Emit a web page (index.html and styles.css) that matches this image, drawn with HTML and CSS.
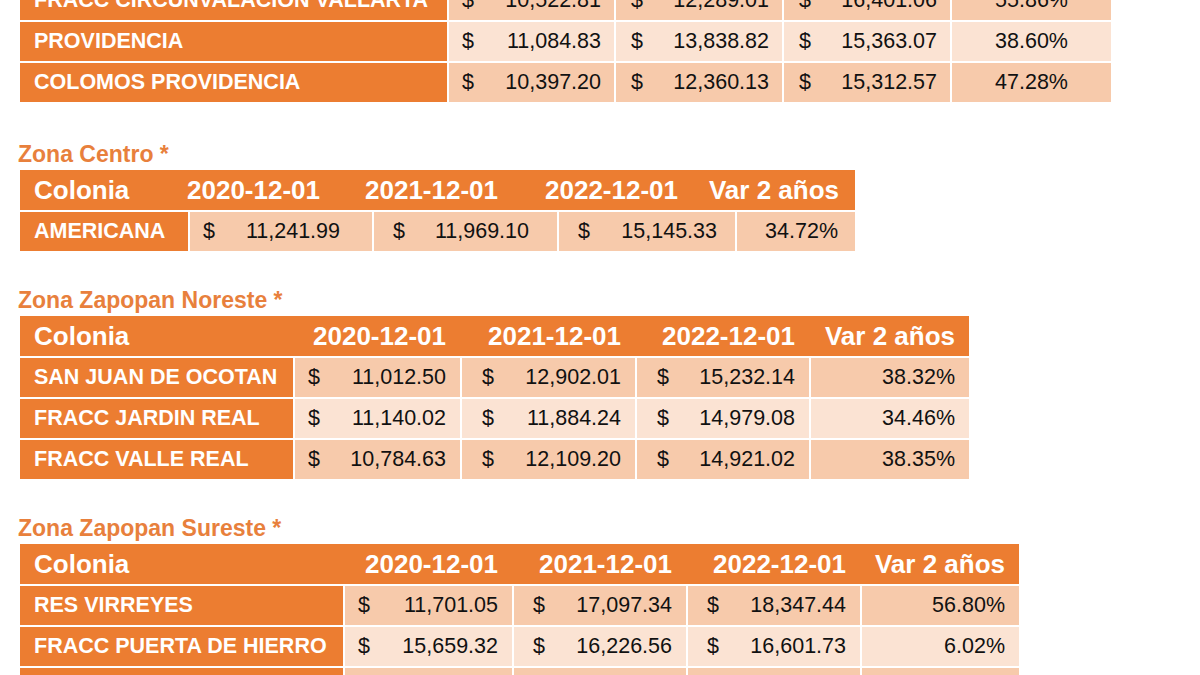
FILE: index.html
```html
<!DOCTYPE html>
<html lang="es">
<head>
<meta charset="utf-8">
<title>Precios por colonia</title>
<link rel="stylesheet" href="styles.css">
</head>
<body>
<main class="sheet">

  <section class="zone zone-top">
    <div class="tbl t-top">
      <div class="row odd">
        <div class="cell name">FRACC CIRCUNVALACION VALLARTA</div>
        <div class="cell money"><span>$</span><span>10,522.81</span></div>
        <div class="cell money"><span>$</span><span>12,289.01</span></div>
        <div class="cell money"><span>$</span><span>16,401.06</span></div>
        <div class="cell pct">55.86%</div>
      </div>
      <div class="row even">
        <div class="cell name">PROVIDENCIA</div>
        <div class="cell money"><span>$</span><span>11,084.83</span></div>
        <div class="cell money"><span>$</span><span>13,838.82</span></div>
        <div class="cell money"><span>$</span><span>15,363.07</span></div>
        <div class="cell pct">38.60%</div>
      </div>
      <div class="row odd">
        <div class="cell name">COLOMOS PROVIDENCIA</div>
        <div class="cell money"><span>$</span><span>10,397.20</span></div>
        <div class="cell money"><span>$</span><span>12,360.13</span></div>
        <div class="cell money"><span>$</span><span>15,312.57</span></div>
        <div class="cell pct">47.28%</div>
      </div>
    </div>
  </section>

  <section class="zone zone-centro">
    <h2 class="zone-title">Zona Centro *</h2>
    <div class="tbl t-centro">
      <div class="row head">
        <div class="cell">Colonia</div>
        <div class="cell">2020-12-01</div>
        <div class="cell">2021-12-01</div>
        <div class="cell">2022-12-01</div>
        <div class="cell">Var 2 años</div>
      </div>
      <div class="row odd">
        <div class="cell name">AMERICANA</div>
        <div class="cell money"><span>$</span><span>11,241.99</span></div>
        <div class="cell money"><span>$</span><span>11,969.10</span></div>
        <div class="cell money"><span>$</span><span>15,145.33</span></div>
        <div class="cell pct">34.72%</div>
      </div>
    </div>
  </section>

  <section class="zone">
    <h2 class="zone-title">Zona Zapopan Noreste *</h2>
    <div class="tbl t-noreste">
      <div class="row head">
        <div class="cell">Colonia</div>
        <div class="cell">2020-12-01</div>
        <div class="cell">2021-12-01</div>
        <div class="cell">2022-12-01</div>
        <div class="cell">Var 2 años</div>
      </div>
      <div class="row odd">
        <div class="cell name">SAN JUAN DE OCOTAN</div>
        <div class="cell money"><span>$</span><span>11,012.50</span></div>
        <div class="cell money"><span>$</span><span>12,902.01</span></div>
        <div class="cell money"><span>$</span><span>15,232.14</span></div>
        <div class="cell pct">38.32%</div>
      </div>
      <div class="row even">
        <div class="cell name">FRACC JARDIN REAL</div>
        <div class="cell money"><span>$</span><span>11,140.02</span></div>
        <div class="cell money"><span>$</span><span>11,884.24</span></div>
        <div class="cell money"><span>$</span><span>14,979.08</span></div>
        <div class="cell pct">34.46%</div>
      </div>
      <div class="row odd">
        <div class="cell name">FRACC VALLE REAL</div>
        <div class="cell money"><span>$</span><span>10,784.63</span></div>
        <div class="cell money"><span>$</span><span>12,109.20</span></div>
        <div class="cell money"><span>$</span><span>14,921.02</span></div>
        <div class="cell pct">38.35%</div>
      </div>
    </div>
  </section>

  <section class="zone">
    <h2 class="zone-title">Zona Zapopan Sureste *</h2>
    <div class="tbl t-sureste">
      <div class="row head">
        <div class="cell">Colonia</div>
        <div class="cell">2020-12-01</div>
        <div class="cell">2021-12-01</div>
        <div class="cell">2022-12-01</div>
        <div class="cell">Var 2 años</div>
      </div>
      <div class="row odd">
        <div class="cell name">RES VIRREYES</div>
        <div class="cell money"><span>$</span><span>11,701.05</span></div>
        <div class="cell money"><span>$</span><span>17,097.34</span></div>
        <div class="cell money"><span>$</span><span>18,347.44</span></div>
        <div class="cell pct">56.80%</div>
      </div>
      <div class="row even">
        <div class="cell name">FRACC PUERTA DE HIERRO</div>
        <div class="cell money"><span>$</span><span>15,659.32</span></div>
        <div class="cell money"><span>$</span><span>16,226.56</span></div>
        <div class="cell money"><span>$</span><span>16,601.73</span></div>
        <div class="cell pct">6.02%</div>
      </div>
      <div class="row odd">
        <div class="cell name"></div>
        <div class="cell money"></div>
        <div class="cell money"></div>
        <div class="cell money"></div>
        <div class="cell pct"></div>
      </div>
    </div>
  </section>

</main>
</body>
</html>
```

FILE: styles.css
```css
html, body {
  margin: 0;
  padding: 0;
  background: #ffffff;
}

body {
  width: 1200px;
  height: 675px;
  overflow: hidden;
  font-family: "Liberation Sans", Arial, sans-serif;
}

.sheet {
  padding-left: 20px;
}

.zone {
  margin-top: 37px;
}

.zone-top {
  margin-top: -19px;
}

.zone-centro {
  margin-top: 40px;
}

.zone-title {
  margin: 0 0 4px -2px;
  font-size: 23px;
  line-height: 24px;
  font-weight: 700;
  color: #e8803c;
}

.tbl {
  display: flex;
  flex-direction: column;
  align-items: flex-start;
  row-gap: 2px;
}

.row {
  display: grid;
  grid-template-columns: var(--cols);
  column-gap: 2px;
  height: 39px;
}

.t-top     { --cols: 427px 165px 166px 166px 159px; }
.t-centro  { --cols: 168px 182px 183px 176px 118px; }
.t-noreste { --cols: 273px 165px 173px 172px 158px; }
.t-sureste { --cols: 323px 167px 172px 172px 157px; }

.cell {
  display: flex;
  align-items: center;
  font-size: 21.5px;
  color: #111111;
  white-space: nowrap;
  overflow: hidden;
}

.row.head {
  height: 40px;
  background: #ec7d31;
}

.row.head .cell {
  justify-content: flex-end;
  padding-right: 14px;
  font-size: 26px;
  font-weight: 700;
  color: #ffffff;
  overflow: visible;
}

.row.head .cell:first-child {
  justify-content: flex-start;
  padding-left: 14px;
  padding-right: 0;
}

.cell.name {
  background: #ec7d31;
  color: #ffffff;
  font-weight: 700;
  padding-left: 14px;
}

.row.odd .money,
.row.odd .pct {
  background: #f7caab;
}

.row.even .money,
.row.even .pct {
  background: #fbe3d3;
}

.cell.money {
  justify-content: space-between;
  padding: 0 14px 0 19px;
}

.cell.money:nth-child(2) {
  padding-left: 13px;
}

.cell.pct {
  justify-content: flex-end;
  padding-right: 14px;
}

/* top table */
.t-top .cell.money {
  padding-left: 15px;
  padding-right: 13px;
}

.t-top .cell.money:nth-child(2) {
  padding-left: 13px;
}

.t-top .cell.pct {
  justify-content: center;
  padding: 0;
}

/* centro table: header labels sit left of their columns, as in the sheet */
.t-centro .row.head .cell:nth-child(2) { padding-right: 52px; }
.t-centro .row.head .cell:nth-child(3) { padding-right: 59px; }
.t-centro .row.head .cell:nth-child(4) { padding-right: 57px; }
.t-centro .row.head .cell:nth-child(5) { padding-right: 16px; }

.t-centro .cell.money:nth-child(2) { padding-right: 32px; }
.t-centro .cell.money:nth-child(3) { padding-right: 28px; }
.t-centro .cell.money:nth-child(4) { padding-right: 18px; }
.t-centro .cell.pct { padding-right: 17px; }

/* noreste: dollar sign a little further in on later columns */
.t-noreste .cell.money:nth-child(3),
.t-noreste .cell.money:nth-child(4) {
  padding-left: 20px;
}
```
